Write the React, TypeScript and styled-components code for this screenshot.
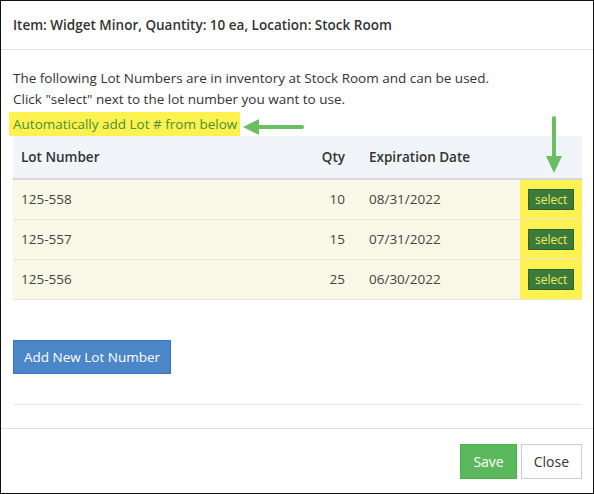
import * as React from 'react';
import styled, { createGlobalStyle } from 'styled-components';

const Global = createGlobalStyle`
  html, body { margin: 0; padding: 0; background: #fff; }
  body { font-family: "Open Sans", "Noto Sans", sans-serif; font-size: 13.5px; color: #333; }
`;

const Modal = styled.div`
  position: relative;
  width: 594px;
  height: 494px;
  box-sizing: border-box;
  border: 1px solid #111;
  display: flex;
  flex-direction: column;
`;

const Header = styled.div`
  height: 48px;
  padding: 0 12px;
  display: flex;
  align-items: center;
  border-bottom: 1px solid #e2e2e2;
  font-weight: 600;
  font-size: 13.5px;
`;

const Body = styled.div`
  flex: 1;
  padding: 18px 11px 0 12px;
  line-height: 21px;
`;

const Highlight = styled.span`
  display: inline-block;
  background: #fdf250;
  color: #4c8f36;
  padding: 1px 3px 1px 4px;
  margin-left: -4px;
  line-height: 22px;
  margin-top: 2px;
`;

const Table = styled.div`
  margin-top: 0;
  width: 569px;
`;

const Row = styled.div<{ $head?: boolean }>`
  display: grid;
  grid-template-columns: 260px 80px 167px 62px;
  height: ${p => (p.$head ? '42px' : '39px')};
  background: ${p => (p.$head ? '#f1f4f8' : '#f9f8e6')};
  border-bottom: ${p => (p.$head ? '2px solid #d6d8db' : '1px solid #e6e6de')};
  font-weight: ${p => (p.$head ? 600 : 400)};
  color: ${p => (p.$head ? '#333' : '#444')};
`;

const Cell = styled.div<{ $right?: boolean; $mark?: boolean; $date?: boolean }>`
  display: flex;
  align-items: center;
  padding: 0 8px 0 ${p => (p.$date ? '16px' : '8px')};
  justify-content: ${p => (p.$right ? 'flex-end' : 'flex-start')};
  background: ${p => (p.$mark ? '#fdf250' : 'transparent')};
`;

const SelectBtn = styled.button`
  border: 1px solid #2f6330;
  background: #3c7a3b;
  color: #f2ee60;
  font-family: inherit;
  font-size: 12px;
  height: 21px;
  padding: 0 6px;
  margin: 0 auto;
`;

const Spacer = styled.div`
  height: 40px;
`;

const AddBtn = styled.button`
  background: #4a86c8;
  border: 1px solid #3b76b6;
  color: #fff;
  font-family: inherit;
  font-size: 13.5px;
  height: 34px;
  padding: 0 10px;
`;

const Rule = styled.div`
  border-top: 1px solid #e8e8e8;
  margin-top: 30px;
`;

const Footer = styled.div`
  height: 64px;
  border-top: 1px solid #e2e2e2;
  display: flex;
  justify-content: flex-end;
  align-items: center;
  gap: 4px;
  padding: 0 11px;
`;

const Btn = styled.button<{ $primary?: boolean }>`
  height: 35px;
  padding: 0 12px;
  font-family: inherit;
  font-size: 14px;
  border: 1px solid ${p => (p.$primary ? '#4cae4c' : '#ccc')};
  background: ${p => (p.$primary ? '#5cb85c' : '#fff')};
  color: ${p => (p.$primary ? '#fff' : '#333')};
`;

const Arrow = styled.svg`
  position: absolute;
`;

const lots = [
  { lot: '125-558', qty: 10, exp: '08/31/2022' },
  { lot: '125-557', qty: 15, exp: '07/31/2022' },
  { lot: '125-556', qty: 25, exp: '06/30/2022' },
];

export default function App() {
  return (
    <>
      <Global />
      <Modal>
        <Header>Item: Widget Minor, Quantity: 10 ea, Location: Stock Room</Header>
        <Body>
          <div>The following Lot Numbers are in inventory at Stock Room and can be used.</div>
          <div>Click "select" next to the lot number you want to use.</div>
          <Highlight>Automatically add Lot # from below</Highlight>
          <Table>
            <Row $head>
              <Cell>Lot Number</Cell>
              <Cell $right>Qty</Cell>
              <Cell $date>Expiration Date</Cell>
              <Cell />
            </Row>
            {lots.map(l => (
              <Row key={l.lot}>
                <Cell>{l.lot}</Cell>
                <Cell $right>{l.qty}</Cell>
                <Cell $date>{l.exp}</Cell>
                <Cell $mark>
                  <SelectBtn>select</SelectBtn>
                </Cell>
              </Row>
            ))}
          </Table>
          <Spacer />
          <AddBtn>Add New Lot Number</AddBtn>
          <Rule />
        </Body>
        <Footer>
          <Btn $primary>Save</Btn>
          <Btn>Close</Btn>
        </Footer>
        <Arrow style={{ left: 242, top: 117 }} width="62" height="18" viewBox="0 0 62 18">
          <line x1="14" y1="9" x2="59" y2="9" stroke="#6abf63" strokeWidth="4" strokeLinecap="round" />
          <polygon points="0,9 16,1 16,17" fill="#6abf63" />
        </Arrow>
        <Arrow style={{ left: 544, top: 115 }} width="18" height="58" viewBox="0 0 18 58">
          <line x1="9" y1="2" x2="9" y2="44" stroke="#6abf63" strokeWidth="4" strokeLinecap="round" />
          <polygon points="9,57 1,40 17,40" fill="#6abf63" />
        </Arrow>
      </Modal>
    </>
  );
}
